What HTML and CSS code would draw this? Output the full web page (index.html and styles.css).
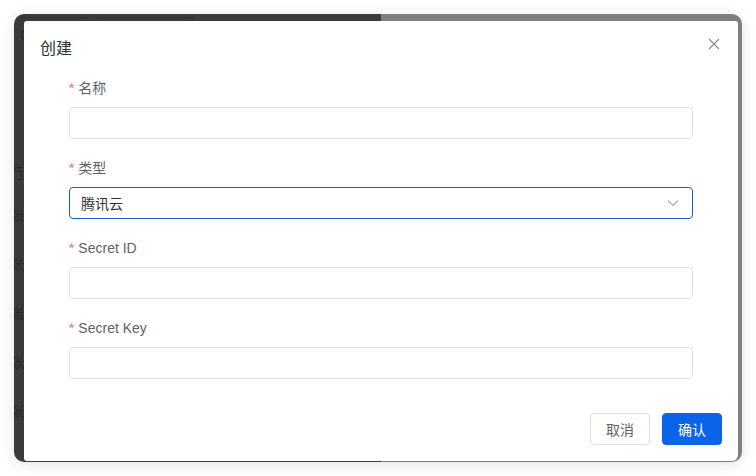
FILE: index.html
```html
<!DOCTYPE html>
<html lang="zh-CN">
<head>
    <meta charset="UTF-8">
    <meta name="viewport" content="width=device-width, initial-scale=1.0">
    <title>创建</title>
    <link rel="stylesheet" href="styles.css">
</head>
<body>
    <div class="window">
        <div class="page">
            <div class="page-left">
                <div class="tabs">
                    <span class="tab tab-active">C</span>
                    <span class="tab"></span>
                </div>
                <div class="rows">
                    <span class="row-head">行</span>
                    <span>张</span>
                    <span>张</span>
                    <span>张</span>
                    <span>张</span>
                    <span>张</span>
                </div>
            </div>
            <div class="page-right"></div>
        </div>

        <div class="modal">
            <div class="modal-header">
                <h3>创建</h3>
                <svg class="close" width="12" height="12" viewBox="0 0 12 12">
                    <path d="M1 1L11 11M11 1L1 11" stroke="#8c8c8c" stroke-width="1.2" fill="none"/>
                </svg>
            </div>

            <form class="form">
                <div class="form-item">
                    <label><span class="req">*</span> 名称</label>
                    <input type="text" class="input">
                </div>
                <div class="form-item">
                    <label><span class="req">*</span> 类型</label>
                    <div class="input select">
                        <span>腾讯云</span>
                        <svg width="12" height="8" viewBox="0 0 12 8">
                            <path d="M1 1.5L6 6.5L11 1.5" stroke="#a8abb2" stroke-width="1.1" fill="none"/>
                        </svg>
                    </div>
                </div>
                <div class="form-item">
                    <label><span class="req">*</span> Secret ID</label>
                    <input type="text" class="input">
                </div>
                <div class="form-item">
                    <label><span class="req">*</span> Secret Key</label>
                    <input type="text" class="input">
                </div>
            </form>

            <div class="modal-footer">
                <button class="btn">取消</button>
                <button class="btn btn-primary">确认</button>
            </div>
        </div>
    </div>
</body>
</html>
```

FILE: styles.css
```css
body {
    font-family: "Liberation Sans", "Noto Sans CJK SC", sans-serif;
    margin: 0;
    padding: 14px;
    background-color: #fff;
}
.window {
    position: relative;
    width: 728px;
    height: 448px;
    border-radius: 10px;
    overflow: hidden;
    box-shadow: 0 2px 14px rgba(0,0,0,0.12);
}
.page {
    display: flex;
    height: 100%;
}
.page-left {
    width: 367px;
    background-color: #3b3b3b;
}
.page-right {
    flex: 1;
    background-color: #7f7f7f;
}
.tabs {
    display: flex;
    gap: 12px;
    padding: 3px 0 0 6px;
}
.tab {
    width: 68px;
    height: 24px;
    border-top: 1px solid #2f2f2f;
    border-radius: 3px;
    font-size: 13px;
    line-height: 36px;
    color: #1d2a55;
}
.tab + .tab {
    width: 94px;
}
.rows {
    display: flex;
    flex-direction: column;
    gap: 31px;
    padding-top: 121px;
    font-family: "Noto Sans CJK SC", sans-serif;
    font-size: 14px;
    line-height: 18px;
    color: #2a2a2a;
    margin-left: -4px;
}
.row-head {
    margin-bottom: -7px;
}
.modal {
    position: absolute;
    left: 10px;
    top: 7px;
    width: 714px;
    height: 440px;
    background: #fff;
    border-radius: 3px 3px 6px 3px;
    box-sizing: border-box;
    display: flex;
    flex-direction: column;
}
.modal-header {
    display: flex;
    justify-content: space-between;
    align-items: center;
    padding: 14px 18px 0 16px;
}
.modal-header h3 {
    margin: 0;
    font-family: "Noto Sans CJK SC", sans-serif;
    font-size: 16px;
    font-weight: normal;
    line-height: 24px;
    color: #303133;
}
.close {
    margin-top: -7px;
}
.form {
    padding: 18px 45px 0;
    flex: 1;
}
.form-item {
    margin-bottom: 18px;
}
.form-item label {
    display: block;
    font-size: 14px;
    line-height: 22px;
    color: #606266;
    margin-bottom: 8px;
}
.req {
    color: #f56c6c;
}
.input {
    display: block;
    width: 100%;
    height: 32px;
    box-sizing: border-box;
    border: 1px solid #dcdfe6;
    border-radius: 4px;
    padding: 0 11px;
    font-size: 14px;
    outline: none;
}
.select {
    display: flex;
    align-items: center;
    justify-content: space-between;
    border-color: #1560bd;
    color: #303133;
    font-family: "Noto Sans CJK SC", sans-serif;
}
.select svg {
    margin-right: 2px;
}
.modal-footer {
    display: flex;
    justify-content: flex-end;
    gap: 12px;
    padding: 0 16px 16px;
}
.btn {
    width: 60px;
    height: 32px;
    border: 1px solid #dcdfe6;
    border-radius: 4px;
    background: #fff;
    color: #606266;
    font-family: "Noto Sans CJK SC", sans-serif;
    font-size: 14px;
}
.btn-primary {
    background: #0a63e8;
    border-color: #0a63e8;
    color: #fff;
}
```
